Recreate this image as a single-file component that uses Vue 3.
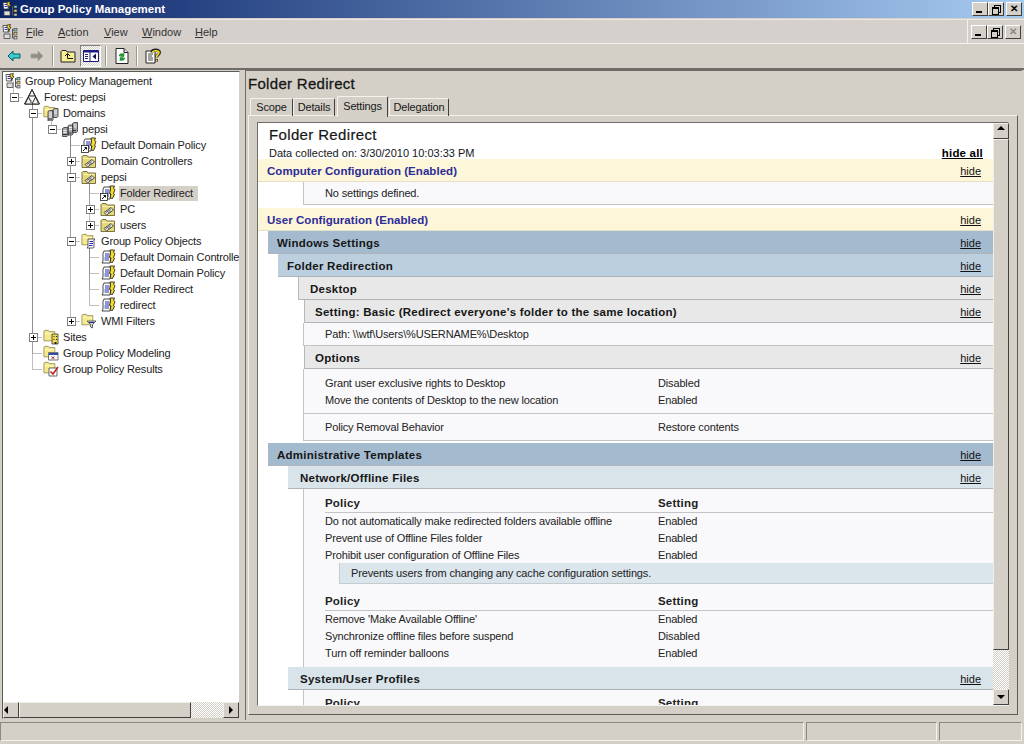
<template>
  <div class="window">
    <svg class="icon-defs" width="0" height="0">
      <defs>
        <symbol id="gpm" viewBox="0 0 16 16">
          <path d="M1 1.500h5l1.500 1L7 8H1.500z" fill="#fff" stroke="#333" stroke-width=".8" />
          <path d="M2.500 3.500h3M2.500 5.500h3" stroke="#2a2ab0" />
          <path d="M5 1 8.500.5 7.500 3l1.500.5L6 7.500l.5-3-1.500-.5z" fill="#f3d830" stroke="#111" stroke-width=".7" />
          <path d="M10.500 5v9M10.500 6h2M10.500 10h2M10.500 14h2" stroke="#555" fill="none" />
          <rect x="12" y="4.500" width="3" height="2.500" fill="#8cc" stroke="#333" stroke-width=".6" />
          <rect x="12" y="8.500" width="3" height="2.500" fill="#ec6" stroke="#333" stroke-width=".6" />
          <rect x="12" y="12.500" width="3" height="2.500" fill="#ccc" stroke="#333" stroke-width=".6" />
          <path d="M2 10h6v4.500H2z" fill="#ddd" stroke="#444" stroke-width=".8" />
        </symbol>
        <symbol id="forest" viewBox="0 0 16 16">
          <path d="M8 .5 15.500 15H.5z" fill="#fff" stroke="#222" />
          <path d="M8 .5 11 7H5zM4.500 8 8 15H1zM11.500 8 15 15H8z" fill="#f4f4f4" stroke="#222" />
          <path d="M5.500 14.500 7.500 10.500 8 15zM12 14.500l2-2 .5 2.500z" fill="#999" />
        </symbol>
        <symbol id="folder" viewBox="0 0 16 16">
          <path d="M1 4V2.500L2 1.500h4L7 3h6.500v10.500H1z" fill="#f4e98c" stroke="#8b8550" stroke-width=".9" />
          <path d="M2 5h11v1H2z" fill="#fffbd0" />
        </symbol>
        <symbol id="domains" viewBox="0 0 16 16">
          <use href="#folder" width="14" height="14" />
          <path d="M5 6.500l1.500-1H10v9.500l-1.500 1H5zM10 4.500l1.500-1H15v8l-1 1h-4z" fill="#b4b4b8" stroke="#333" stroke-width=".8" />
          <path d="M6 8h3M6 10h3M6 12h3M11 6h3M11 8h3" stroke="#eee" />
          <path d="M5 14h4" stroke="#333" />
        </symbol>
        <symbol id="domain" viewBox="0 0 16 16">
          <path d="M.5 7.500l1.500-1h4v8l-1 1H.5zM6 5l1.500-1H11v9l-1 1H6zM10.500 2.500l1.500-1h3.500v9l-1 1h-4z" fill="#a8a8ac" stroke="#333" stroke-width=".8" />
          <path d="M1.500 9.500h3M1.500 11.500h3M7 6.500h3M7 8.500h3M11.500 4h3M11.500 6h3" stroke="#f0f0f0" />
          <path d="M1 13.500h4M6.500 12h3M11 9.500h3" stroke="#333" />
        </symbol>
        <symbol id="ou" viewBox="0 0 16 16">
          <path d="M1 5V3.500L2 2.500h4L7 4h7.500v10.500H1z" fill="#e6d878" stroke="#6c6738" stroke-width=".9" />
          <path d="M2 5h12v1H2z" fill="#f8f2b0" />
          <path d="M4 11.500 11 6.500 13.500 9 6.500 14z" fill="#e2e2da" stroke="#444" stroke-width=".9" />
          <path d="M6 11.500 10.500 8.500M8 12l3-2" stroke="#666" />
        </symbol>
        <symbol id="script" viewBox="0 0 16 16">
          <path d="M4 2h7l-.5 2v8L10 14H2l1-2V4z" fill="#fff" stroke="#333" stroke-width=".9" />
          <path d="M5 5h4.500M5 7h4.500M4.500 9h4.500M4.500 11h4.500" stroke="#2626b4" />
          <path d="M10 1h4.500l-1 2.500 1.500 1-1.500 4 1 .5-2 4.500-2.500-.5 1-4-1.500-.5 1-4z" fill="#f6dc2a" stroke="#111" stroke-width=".8" />
        </symbol>
        <symbol id="link" viewBox="0 0 16 16">
          <use href="#script" />
          <rect x=".5" y="8.500" width="7" height="7" fill="#fff" stroke="#222" stroke-width=".8" />
          <path d="M2 14 5.500 10.500M3.500 10.500h2v2" fill="none" stroke="#111" />
        </symbol>
        <symbol id="gpos" viewBox="0 0 16 16">
          <use href="#folder" width="14" height="14" />
          <path d="M7 6h7l-1 1v7l-.5 1H6l1-1z" fill="#fff" stroke="#333" stroke-width=".8" />
          <path d="M8.500 8.500h3.500M8.500 10.500h3.500M8 12.500h3.500" stroke="#2626b4" />
        </symbol>
        <symbol id="wmi" viewBox="0 0 16 16">
          <use href="#folder" width="14" height="14" />
          <path d="M6 8h9l-3.500 3.500V15l-2-1v-2.500z" fill="#cfd6de" stroke="#444" stroke-width=".8" />
          <path d="M8 9.500h5" stroke="#2626b4" />
        </symbol>
        <symbol id="sites" viewBox="0 0 16 16">
          <use href="#folder" width="14" height="14" />
          <path d="M9 5h6v10H9z" fill="#f0dc50" stroke="#333" stroke-width=".8" />
          <path d="M10.500 7h1v1h-1zM13 7h1v1h-1zM10.500 10h1v1h-1zM13 10h1v1h-1zM11.500 13h2v2h-2z" fill="#222" />
        </symbol>
        <symbol id="modeling" viewBox="0 0 16 16">
          <use href="#folder" width="14" height="14" />
          <path d="M5.500 7.500H15V15H5.500z" fill="#fff" stroke="#555" stroke-width=".8" />
          <path d="M6 8h9v2H6z" fill="#2a4fa8" />
          <path d="M8.500 11.500l3 2.500M11.500 11.500l-3 2.500" stroke="#a03030" />
        </symbol>
        <symbol id="results" viewBox="0 0 16 16">
          <use href="#folder" width="14" height="14" />
          <path d="M6 7h8v8H6z" fill="#fff" stroke="#444" stroke-width=".8" />
          <path d="M7.500 10.500 10 13l5-7" fill="none" stroke="#c02020" stroke-width="1.500" />
        </symbol>
      </defs>
    </svg>

    <div class="title-bar">
      <svg class="icon16"><use href="#gpm" /></svg>
      <span class="title-text">Group Policy Management</span>
      <div class="caption-btns">
        <button class="cap-btn"><span class="min"></span></button>
        <button class="cap-btn"><span class="res"></span></button>
        <button class="cap-btn close-gap"><span class="x">✕</span></button>
      </div>
    </div>

    <div class="menu-bar">
      <svg class="icon16 menu-icon"><use href="#gpm" /></svg>
      <span class="menu-item" style="width: 32px"><u>F</u>ile</span>
      <span class="menu-item" style="width: 46px"><u>A</u>ction</span>
      <span class="menu-item" style="width: 38px"><u>V</u>iew</span>
      <span class="menu-item" style="width: 53px"><u>W</u>indow</span>
      <span class="menu-item"><u>H</u>elp</span>
      <div class="caption-btns mdi">
        <button class="cap-btn"><span class="min"></span></button>
        <button class="cap-btn"><span class="res"></span></button>
        <button class="cap-btn close-gap off"><span class="x">✕</span></button>
      </div>
    </div>

    <div class="tool-bar">
      <svg class="tool back" viewBox="0 0 14 12" width="14" height="12">
        <path d="M1 6 6 1v3h7v4H6v3z" fill="#38d0d0" stroke="#0a5a60" />
      </svg>
      <svg class="tool fwd" viewBox="0 0 14 12" width="14" height="12">
        <path d="M13 6 8 1v3H1v4h7v3z" fill="#908c84" stroke="#a8a49c" />
      </svg>
      <span class="tool-sep s1"></span>
      <svg class="tool up" viewBox="0 0 16 14" width="16" height="14">
        <path d="M1 13V2.500L2 1.500h4l1 1.500h8v10z" fill="#f6ee90" stroke="#222" />
        <path d="M5 7 7.500 4.500 10 7M7.500 5v4.500H13" fill="none" stroke="#111" />
      </svg>
      <span class="tool-pressed">
        <svg viewBox="0 0 16 12" width="16" height="12">
          <path d="M.5.500h15v11H.5z" fill="#fff" stroke="#1a1a80" />
          <path d="M1 1h14v1.500H1z" fill="#1a1a80" />
          <path d="M7 2v9" stroke="#1a1a80" />
          <path d="M2 4.500h3M2 6.500h3M2 8.500h3" stroke="#25257a" />
          <path d="M13 3.500 9.500 6.500 13 9.500z" fill="#14144a" />
        </svg>
      </span>
      <span class="tool-sep s2"></span>
      <svg class="tool refresh" viewBox="0 0 14 16" width="14" height="16">
        <path d="M1 .5h8l4 4v11H1z" fill="#fff" stroke="#222" />
        <path d="M9 .5v4h4" fill="#ddd" stroke="#222" />
        <path d="M4 8a3 3 0 0 1 4.500-2L9 5v3.500H5.500l1.200-1A1.500 1.500 0 0 0 5 8zM10 10a3 3 0 0 1-4.500 2L5 13V9.500h3.500l-1.200 1A1.500 1.500 0 0 0 9 10z" fill="#20a030" stroke="#0a6a14" stroke-width=".4" />
      </svg>
      <span class="tool-sep s3"></span>
      <svg class="tool help" viewBox="0 0 16 16" width="16" height="16">
        <path d="M1 3h9v12H1z" fill="#fff" stroke="#222" />
        <path d="M3 6h5M3 8h4M3 10h5M3 12h5" stroke="#444" />
        <path d="M7 4.500C7 1.500 14.500 1 14.500 4.500 14.500 7 11.500 6.500 11.500 9.500M11.500 11v2.500" fill="none" stroke="#222" stroke-width="3" />
        <path d="M7.500 4.500C8 2.500 14 2 14 4.500 14 6.500 11.500 6.500 11.500 9.500M11.500 11.500v1.500" fill="none" stroke="#f4e020" stroke-width="1.600" />
      </svg>
    </div>

    <div class="main">
      <div class="tree-pane">
        <div class="tree-view">
          <svg class="tree-lines" width="236" height="320">
            <path v-for="(d, i) in treeLines" :key="i" :d="d" stroke="#808080" stroke-dasharray="1 1" fill="none" />
          </svg>
          <div
            v-for="node in tree"
            :key="node.row"
            class="tree-row"
            :style="{ paddingLeft: node.level * 19 + 'px' }"
          >
            <span v-if="node.exp" class="expander" :style="{ left: node.level * 19 - 14 + 'px' }">
              <i class="h"></i><i v-if="node.exp === '+'" class="v"></i>
            </span>
            <svg class="icon16 node-icon"><use :href="'#' + node.icon" /></svg>
            <span class="node-label" :class="{ selected: node.selected }">{{ node.label }}</span>
          </div>
        </div>
        <div class="h-scroll">
          <span class="sb-btn"><i class="arrow left"></i></span>
          <span class="h-thumb"></span>
          <span class="dither"></span>
          <span class="sb-btn"><i class="arrow right"></i></span>
        </div>
      </div>

      <div class="detail-pane">
        <div class="detail-title">Folder Redirect</div>
        <div class="tabs">
          <span v-for="tab in tabs" :key="tab.name" class="tab" :class="{ active: tab.active }" :style="{ width: tab.width + 'px' }">{{ tab.name }}</span>
        </div>
        <div class="tab-panel">
          <div class="report-frame">
            <div class="report">
              <div class="report-head">
                <div class="report-title">Folder Redirect</div>
                <div class="report-meta">
                  <span>Data collected on: 3/30/2010 10:03:33 PM</span>
                  <a class="hide-all">hide all</a>
                </div>
              </div>
              <template v-for="(row, i) in report" :key="i">
                <div v-if="row.bar" class="bar" :class="row.bar">
                  <span>{{ row.text }}</span><a class="hide">hide</a>
                </div>
                <div v-else-if="row.gap !== undefined" class="gap" :class="{ line: row.line, plain: row.plain }" :style="{ height: row.gap + 'px' }"></div>
                <div v-else-if="row.explain" class="body-row explain-wrap">
                  <div class="explain">{{ row.explain }}</div>
                </div>
                <div v-else class="body-row" :class="{ head: row.head, text: row.single }">
                  <span class="col-a">{{ row.a }}</span><span class="col-b">{{ row.b }}</span>
                </div>
              </template>
            </div>
            <div class="v-scroll">
              <span class="sb-btn"><i class="arrow up"></i></span>
              <span class="v-thumb"></span>
              <span class="dither"></span>
              <span class="sb-btn"><i class="arrow down"></i></span>
            </div>
          </div>
        </div>
      </div>
    </div>

    <div class="status-bar">
      <span class="cell wide"></span>
      <span class="cell mid"></span>
      <span class="cell end"></span>
    </div>
  </div>
</template>

<script setup>
import { computed } from 'vue'

const raw = [
  [0, null, 'gpm', 'Group Policy Management'],
  [1, '-', 'forest', 'Forest: pepsi'],
  [2, '-', 'domains', 'Domains'],
  [3, '-', 'domain', 'pepsi'],
  [4, null, 'link', 'Default Domain Policy'],
  [4, '+', 'ou', 'Domain Controllers'],
  [4, '-', 'ou', 'pepsi'],
  [5, null, 'link', 'Folder Redirect', true],
  [5, '+', 'ou', 'PC'],
  [5, '+', 'ou', 'users'],
  [4, '-', 'gpos', 'Group Policy Objects'],
  [5, null, 'script', 'Default Domain Controllers Policy'],
  [5, null, 'script', 'Default Domain Policy'],
  [5, null, 'script', 'Folder Redirect'],
  [5, null, 'script', 'redirect'],
  [4, '+', 'wmi', 'WMI Filters'],
  [2, '+', 'sites', 'Sites'],
  [2, null, 'modeling', 'Group Policy Modeling'],
  [2, null, 'results', 'Group Policy Results']
]

const tree = raw.map((r, row) => ({
  row,
  level: r[0],
  exp: r[1],
  icon: r[2],
  label: r[3],
  selected: !!r[4]
}))

// dotted connectors, worked out from the levels
const treeLines = computed(() => {
  const lines = []
  tree.forEach((node, i) => {
    if (node.level === 0) return
    const x = node.level * 19 - 8.5
    const y = i * 16 + 8.5
    lines.push(`M${x} ${y}H${x + 10}`)
    let p = i - 1
    while (tree[p].level >= node.level) p--
    lines.push(`M${x} ${p * 16 + 8.5}V${y}`)
  })
  return lines
})

const tabs = [
  { name: 'Scope', width: 43 },
  { name: 'Details', width: 42 },
  { name: 'Settings', width: 51, active: true },
  { name: 'Delegation', width: 60 }
]

const report = [
  { bar: 'config', text: 'Computer Configuration (Enabled)' },
  { a: 'No settings defined.', single: true },
  { gap: 3, plain: true },
  { bar: 'config', text: 'User Configuration (Enabled)' },
  { bar: 'l1', text: 'Windows Settings' },
  { bar: 'l2', text: 'Folder Redirection' },
  { bar: 'l3', text: 'Desktop' },
  { bar: 'l4', text: "Setting: Basic (Redirect everyone's folder to the same location)" },
  { a: 'Path: \\\\wtf\\Users\\%USERNAME%\\Desktop', single: true },
  { bar: 'l4', text: 'Options' },
  { gap: 6 },
  { a: 'Grant user exclusive rights to Desktop', b: 'Disabled' },
  { a: 'Move the contents of Desktop to the new location', b: 'Enabled' },
  { gap: 4, line: true },
  { gap: 5 },
  { a: 'Policy Removal Behavior', b: 'Restore contents' },
  { gap: 4, line: true },
  { gap: 2, plain: true },
  { bar: 'l1', text: 'Administrative Templates' },
  { bar: 'l5', text: 'Network/Offline Files' },
  { gap: 6 },
  { a: 'Policy', b: 'Setting', head: true },
  { a: 'Do not automatically make redirected folders available offline', b: 'Enabled' },
  { a: 'Prevent use of Offline Files folder', b: 'Enabled' },
  { a: 'Prohibit user configuration of Offline Files', b: 'Enabled' },
  { explain: 'Prevents users from changing any cache configuration settings.' },
  { gap: 10 },
  { a: 'Policy', b: 'Setting', head: true },
  { a: "Remove 'Make Available Offline'", b: 'Enabled' },
  { a: 'Synchronize offline files before suspend', b: 'Disabled' },
  { a: 'Turn off reminder balloons', b: 'Enabled' },
  { gap: 5 },
  { bar: 'l5', text: 'System/User Profiles' },
  { gap: 5 },
  { a: 'Policy', b: 'Setting', head: true }
]
</script>

<style>
html, body {
  margin: 0;
  background: #d4d0c8;
}
</style>

<style scoped>
.window {
  width: 1024px;
  height: 744px;
  overflow: hidden;
  display: flex;
  flex-direction: column;
  background: #d4d0c8;
  font-family: "Liberation Sans", Arial, sans-serif;
  font-size: 11px;
  letter-spacing: -0.15px;
  color: #161616;
}

.icon-defs {
  position: absolute;
}

.icon16 {
  width: 16px;
  height: 16px;
  flex: none;
}

/* title + menu */
.title-bar {
  height: 18px;
  flex: none;
  display: flex;
  align-items: center;
  padding-left: 2px;
  background: linear-gradient(90deg, #0a246a, #a6caf0);
}

.title-text {
  margin-left: 2px;
  color: #fff;
  font-weight: bold;
  font-size: 11.500px;
  letter-spacing: 0;
}

.caption-btns {
  margin-left: auto;
  margin-right: 2px;
  display: flex;
}

.cap-btn {
  width: 16px;
  height: 14px;
  padding: 0;
  position: relative;
  background: #d4d0c8;
  border: 1px solid;
  border-color: #fff #404040 #404040 #fff;
  display: block;
}

.close-gap {
  margin-left: 2px;
}

.min {
  position: absolute;
  left: 3px;
  bottom: 2px;
  width: 6px;
  height: 2px;
  background: #000;
}

.res {
  position: absolute;
  left: 3px;
  top: 4px;
  width: 5px;
  height: 5px;
  border: 1px solid #000;
  border-top-width: 2px;
  box-shadow: 2px -2px 0 -1px #d4d0c8, 2px -2px 0 0 #000;
}

.x {
  position: absolute;
  inset: 0;
  font-size: 10px;
  line-height: 12px;
  font-weight: bold;
  text-align: center;
  color: #000;
}

.off .x {
  color: #8a8a84;
}

.menu-bar {
  height: 25px;
  margin-top: 1px;
  flex: none;
  box-sizing: border-box;
  display: flex;
  align-items: center;
  padding-left: 2px;
  background: #d6d0cc;
  border-top: 1px solid #ece9e4;
  border-bottom: 1px solid #f4f2ee;
  color: #333;
  letter-spacing: 0;
}

.menu-icon {
  margin-right: 8px;
}

.menu-item {
  display: inline-block;
}

.mdi {
  margin-right: 3px;
  padding-left: 3px;
  height: 100%;
  align-items: center;
  border-left: 1px solid #f4f2ee;
}

/* toolbar */
.tool-bar {
  height: 26px;
  flex: none;
  box-sizing: border-box;
  position: relative;
  border-bottom: 2px solid #6e6c66;
}

.tool,
.tool-sep,
.tool-pressed {
  position: absolute;
}

.back { left: 7px; top: 6px; }
.fwd { left: 30px; top: 6px; }
.up { left: 60px; top: 5px; }
.refresh { left: 115px; top: 4px; }
.help { left: 145px; top: 4px; }

.tool-sep {
  top: 2px;
  width: 1px;
  height: 20px;
  background: #9a9890;
  border-right: 1px solid #fff;
}

.s1 { left: 52px; }
.s2 { left: 105px; }
.s3 { left: 136px; }

.tool-pressed {
  left: 80px;
  top: 1px;
  width: 21px;
  height: 22px;
  box-sizing: border-box;
  display: flex;
  align-items: center;
  justify-content: center;
  border: 1px solid;
  border-color: #808080 #fff #fff #808080;
  background: repeating-conic-gradient(#fff 0 25%, #d4d0c8 0 50%) 0 0 / 2px 2px;
}

/* panes */
.main {
  flex: 1;
  min-height: 0;
  display: flex;
  align-items: flex-start;
  padding: 0 0 0 2px;
}

.tree-pane {
  width: 238px;
  height: 648px;
  margin-top: 1px;
  box-sizing: border-box;
  display: flex;
  flex-direction: column;
  background: #fff;
  border: 1px solid;
  border-color: #5c5c58 #d4d0c8 #d4d0c8 #5c5c58;
}

.tree-view {
  flex: 1;
  position: relative;
  padding-top: 1px;
  overflow: hidden;
}

.tree-lines {
  position: absolute;
  left: 0;
  top: 1px;
}

.tree-row {
  position: relative;
  height: 16px;
  display: flex;
  align-items: center;
  padding-left: 2px;
  margin-left: 2px;
  white-space: nowrap;
  color: #222;
}

.node-icon {
  position: relative;
}

.node-label {
  position: relative;
  margin-left: 3px;
  padding: 0 1px;
  line-height: 15px;
}

.selected {
  background: #d4d0c8;
  padding-right: 5px;
}

.expander {
  position: absolute;
  top: 4px;
  width: 9px;
  height: 9px;
  box-sizing: border-box;
  background: #fff;
  border: 1px solid #808080;
}

.expander .h {
  position: absolute;
  left: 1px;
  top: 3px;
  width: 5px;
  height: 1px;
  background: #000;
}

.expander .v {
  position: absolute;
  left: 3px;
  top: 1px;
  width: 1px;
  height: 5px;
  background: #000;
}

.h-scroll {
  height: 16px;
  flex: none;
  display: flex;
}

.sb-btn {
  width: 16px;
  height: 16px;
  flex: none;
  box-sizing: border-box;
  position: relative;
  background: #d4d0c8;
  border: 1px solid;
  border-color: #f0eee8 #404040 #404040 #f0eee8;
}

.arrow {
  position: absolute;
  width: 0;
  height: 0;
  border: 4px solid transparent;
}

.arrow.left { left: 0; top: 3px; border-left-width: 0; border-right-color: #000; }
.arrow.right { left: 5px; top: 3px; border-right-width: 0; border-left-color: #000; }
.arrow.up { left: 3px; top: 2px; border-top-width: 0; border-bottom-color: #000; }
.arrow.down { left: 3px; top: 5px; border-bottom-width: 0; border-top-color: #000; }

.h-thumb {
  width: 172px;
  flex: none;
  box-sizing: border-box;
  background: #d4d0c8;
  border: 1px solid;
  border-color: #f0eee8 #404040 #404040 #f0eee8;
}

.dither {
  flex: 1;
  background: repeating-conic-gradient(#fff 0 25%, #d4d0c8 0 50%) 0 0 / 2px 2px;
}

.detail-pane {
  width: 777px;
  height: 650px;
  margin-left: 5px;
  box-sizing: border-box;
  display: flex;
  flex-direction: column;
  padding-left: 2px;
  border-top: 1px solid #6e6c66;
  border-left: 1px solid #6e6c66;
  position: relative;
}

.detail-title {
  height: 25px;
  flex: none;
  line-height: 26px;
  font-size: 15px;
  letter-spacing: .3px;
  -webkit-text-stroke: 0.3px #161616;
}

.tabs {
  height: 20px;
  flex: none;
  display: flex;
  align-items: flex-end;
  padding-left: 2px;
  position: relative;
  z-index: 1;
}

.tab {
  height: 18px;
  box-sizing: border-box;
  text-align: center;
  line-height: 17px;
  border: 1px solid;
  border-color: #f4f2ee #404040 transparent #f4f2ee;
  border-bottom: 0;
  border-radius: 2px 2px 0 0;
}

.tab.active {
  height: 21px;
  line-height: 18px;
  margin: 0 1px 0 2px;
  background: #d4d0c8;
  margin-bottom: -1px;
}

.tab-panel {
  width: 770px;
  height: 600px;
  margin-top: -1px;
  box-sizing: border-box;
  padding: 6px 8px 8px 8px;
  border: 1px solid;
  border-color: #f4f2ee #5c5c58 #5c5c58 #f4f2ee;
}

.report-frame {
  width: 752px;
  height: 584px;
  box-sizing: border-box;
  display: flex;
  background: #fff;
  border: 1px solid;
  border-color: #6e6c66 #f4f2ee #f4f2ee #6e6c66;
}

.report {
  width: 735px;
  height: 582px;
  flex: none;
  overflow: hidden;
}

.report-head {
  height: 36px;
  box-sizing: border-box;
  padding: 3px 10px 0 11px;
}

.report-title {
  font-size: 15px;
  line-height: 18px;
  letter-spacing: .35px;
  -webkit-text-stroke: 0.2px #161616;
}

.report-meta {
  display: flex;
  justify-content: space-between;
  line-height: 15px;
  margin-top: 2px;
  letter-spacing: 0;
}

.hide-all {
  font-weight: bold;
  font-size: 11.500px;
  letter-spacing: .2px;
  text-decoration: underline;
  color: #000;
}

/* report rows */
.bar {
  height: 23px;
  box-sizing: border-box;
  display: flex;
  align-items: center;
  justify-content: space-between;
  padding-top: 1px;
  padding-right: 12px;
  font-weight: bold;
  font-size: 11.500px;
  border-bottom: 1px solid #b0b4b8;
  letter-spacing: .25px;
}

.hide {
  font-weight: normal;
  font-size: 11px;
  letter-spacing: 0;
  text-decoration: underline;
  color: #111;
}

.bar.config {
  background: #fdf6d8;
  color: #2c2c98;
  padding-left: 9px;
  letter-spacing: .05px;
  border-bottom-color: #e6e0c8;
}

.bar.l1 { margin-left: 10px; padding-left: 9px; background: #a4bbcf; }
.bar.l2 { margin-left: 20px; padding-left: 9px; background: #bbcfde; }
.bar.l3 { margin-left: 40px; padding-left: 11px; background: #e8e8e8; border-left: 1px solid #b8b8b8; }
.bar.l4 { margin-left: 46px; padding-left: 10px; background: #e8e8e8; border-left: 1px solid #b8b8b8; }
.bar.l5 { margin-left: 30px; padding-left: 12px; background: #d8e3ea; }

.body-row {
  margin-left: 45px;
  height: 17px;
  line-height: 17px;
  display: flex;
  padding-left: 21px;
  background: #f9f9fb;
  border-left: 1px solid #c4c4c4;
  color: #222;
}

.body-row.text {
  height: 23px;
  line-height: 23px;
  box-sizing: border-box;
  border-bottom: 1px solid #c4c4c4;
}

.body-row.head {
  height: 18px;
  box-sizing: border-box;
  font-weight: bold;
  font-size: 11.500px;
  letter-spacing: .2px;
  background: linear-gradient(#c4c4c4, #c4c4c4) 21px 100% / 100% 1px no-repeat #f9f9fb;
}

.col-a {
  width: 333px;
  flex: none;
  white-space: nowrap;
}

.gap {
  margin-left: 45px;
  background: #f9f9fb;
  border-left: 1px solid #c4c4c4;
}

.gap.line {
  border-bottom: 1px solid #c4c4c4;
}

.gap.plain {
  background: #fff;
  border-left: 0;
}

.explain-wrap {
  height: 20px;
  margin-top: -1px;
  padding-left: 35px;
  position: relative;
}

.explain {
  flex: 1;
  height: 20px;
  line-height: 20px;
  padding-left: 11px;
  background: #dae5ec;
  border-bottom: 1px solid #c4ccd0;
  border-left: 1px solid #c4ccd0;
}

.v-scroll {
  width: 16px;
  flex: none;
  display: flex;
  flex-direction: column;
}

.v-thumb {
  height: 511px;
  flex: none;
  box-sizing: border-box;
  background: #d4d0c8;
  border: 1px solid;
  border-color: #f0eee8 #404040 #404040 #f0eee8;
}

/* status */
.status-bar {
  height: 23px;
  flex: none;
  display: flex;
  gap: 2px;
  padding: 1px 2px 3px 0;
  box-sizing: border-box;
}

.cell {
  box-sizing: border-box;
  border: 1px solid;
  border-color: #8a8880 #f4f2ee #f4f2ee #8a8880;
}

.wide { width: 804px; }
.mid { width: 131px; }
.end { flex: 1; }
</style>
